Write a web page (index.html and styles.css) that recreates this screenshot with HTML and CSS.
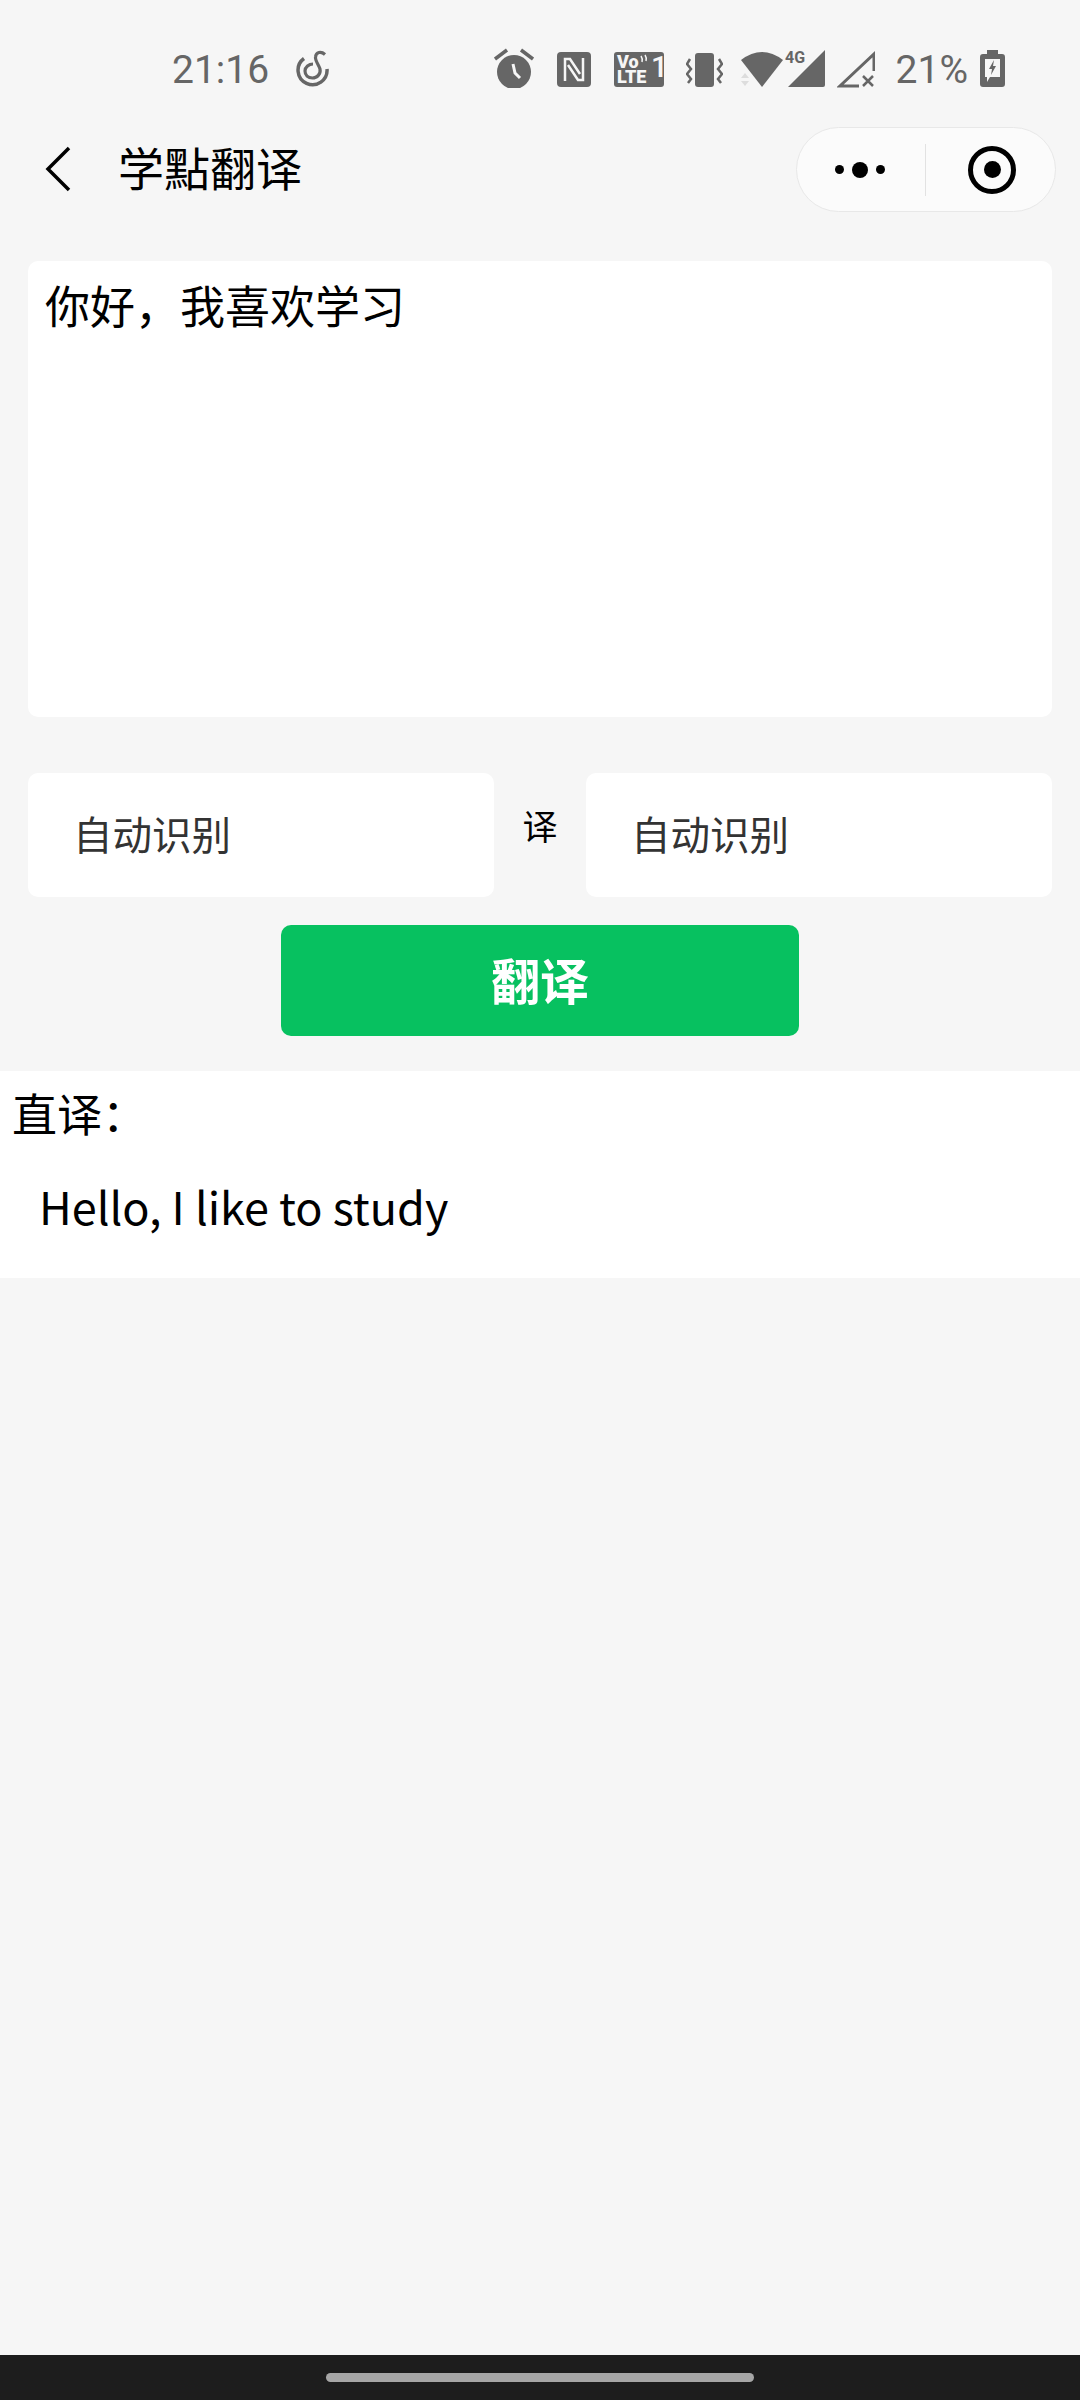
FILE: index.html
```html
<!DOCTYPE html>
<html lang="zh-CN">
<head>
    <meta charset="UTF-8">
    <meta name="viewport" content="width=device-width, initial-scale=1.0">
    <title>学點翻译</title>
    <link rel="stylesheet" href="styles.css">
</head>
<body>
    <div class="status">
        <span class="clock">21:16</span>
        <svg class="ic netease" width="34" height="40" viewBox="0 0 34 40">
            <path d="M8 10.5 A14.5 14.5 0 1 0 31 21" fill="none" stroke="#666" stroke-width="3.5"/>
            <path d="M29 6.5 C25 3 20 4 19.5 9 C19 13 23 17 24 21 C25 26 21 30 16.5 30 C12 30 9 27 9 23 C9 19 13 16 17 16" fill="none" stroke="#666" stroke-width="3.2"/>
        </svg>
        <div class="status-right">
            <svg class="ic alarm" width="40" height="40" viewBox="0 0 40 40">
                <circle cx="20" cy="24" r="17" fill="#666"/>
                <path d="M1 11 L13 2 M39 11 L27 2" stroke="#666" stroke-width="3.5"/>
                <path d="M19 16 L21 25 L26 30" fill="none" stroke="#f6f6f6" stroke-width="3"/>
            </svg>
            <svg class="ic nfc" width="34" height="40" viewBox="0 0 34 40">
                <rect x="0" y="4" width="34" height="35" rx="4" fill="#666"/>
                <path d="M8 33 V11 H13 L23 26 M26 10 V32 H21 L11 17" fill="none" stroke="#f6f6f6" stroke-width="2.5"/>
            </svg>
            <svg class="ic volte" width="54" height="40" viewBox="0 0 54 40">
                <rect x="0" y="4" width="50" height="35" rx="3" fill="#666"/>
                <text x="3" y="20" class="volte-txt">Vo</text>
                <text x="3" y="35" class="volte-txt">LTE</text>
                <text x="37" y="29" class="volte-num">1</text>
                <path d="M27 8 Q29 11 28 14 M31 7 Q33 10 32 13" fill="none" stroke="#f6f6f6" stroke-width="1.5"/>
            </svg>
            <svg class="ic vibrate" width="37" height="40" viewBox="0 0 37 40">
                <rect x="9" y="5" width="19" height="34" rx="3" fill="#666"/>
                <path d="M4 11 L1 16 L5 21 L1 26 L5 31 L2 35 M33 11 L36 16 L32 21 L36 26 L32 31 L35 35" fill="none" stroke="#666" stroke-width="2.5"/>
            </svg>
            <svg class="ic wifi" width="42" height="40" viewBox="0 0 42 40">
                <path d="M0 12 Q21 -4 42 12 L21 39 Z" fill="#666"/>
                <path d="M4 25 L8 30 H0 Z M0 33 H8 L4 38 Z" fill="#ddd"/>
            </svg>
            <svg class="ic signal" width="40" height="40" viewBox="0 0 40 40">
                <path d="M3 39 L40 2 V37 Q40 39 38 39 Z" fill="#666"/>
                <text x="0" y="15" class="four-g">4G</text>
            </svg>
            <svg class="ic nosignal" width="38" height="40" viewBox="0 0 38 40">
                <path d="M37 23 V6 L3 38 H22" fill="none" stroke="#666" stroke-width="3"/>
                <path d="M26 28 L36 38 M36 28 L26 38" stroke="#666" stroke-width="2.5"/>
            </svg>
            <span class="pct">21%</span>
            <svg class="ic battery" width="25" height="40" viewBox="0 0 25 40">
                <path d="M7 2 H18 V6 H22 Q25 6 25 9 V36 Q25 39 22 39 H3 Q0 39 0 36 V9 Q0 6 3 6 H7 Z" fill="#666"/>
                <path d="M5 11 H20 V29 H10 L7 34 V29 H5 Z" fill="#f6f6f6"/>
                <path d="M14 12 L9 21 H12 L11 27 L16 18 H13 Z" fill="#666"/>
            </svg>
        </div>
    </div>

    <div class="nav">
        <svg class="back" width="26" height="48" viewBox="0 0 26 48">
            <path d="M24 3 L3 24 L24 45" fill="none" stroke="#000" stroke-width="3.5"/>
        </svg>
        <div class="nav-title">学點翻译</div>
        <div class="capsule">
            <div class="capsule-side left">
                <span class="dot"></span>
                <span class="dot big"></span>
                <span class="dot"></span>
            </div>
            <div class="capsule-line"></div>
            <div class="capsule-side right">
                <span class="target"><span class="target-in"></span></span>
            </div>
        </div>
    </div>

    <div class="content">
        <div class="input-box">你好，我喜欢学习</div>
        <div class="lang-row">
            <div class="lang">自动识别</div>
            <div class="lang-mid">译</div>
            <div class="lang">自动识别</div>
        </div>
        <div class="btn">翻译</div>
    </div>

    <div class="result">
        <div class="result-label">直译：</div>
        <div class="result-text">Hello, I like to study</div>
    </div>

    <div class="spacer"></div>

    <div class="home-bar"><div class="home-pill"></div></div>
</body>
</html>
```

FILE: styles.css
```css
body {
    display: flex;
    flex-direction: column;
    height: 2400px;
    margin: 0;
    background-color: #f6f6f6;
    color: #000;
    font-family: "Noto Sans CJK SC", "Noto Sans", sans-serif;
}

/* status bar */
.status {
    display: flex;
    align-items: flex-start;
    height: 40px;
    padding: 48px 75px 0 172px;
    color: #666;
}
.clock, .pct {
    padding-top: 2px;
    font-family: Roboto, sans-serif;
    font-size: 39px;
    line-height: 40px;
}
.ic {
    display: block;
    flex: none;
}
.netease { margin-left: 27px; }
.status-right {
    display: flex;
    align-items: flex-start;
    margin-left: auto;
}
.nfc { margin-left: 23px; }
.volte {
    margin-left: 23px;
    margin-right: -4px;
}
.vibrate { margin-left: 22px; }
.wifi { margin-left: 18px; }
.signal { margin-left: 2px; }
.nosignal { margin-left: 12px; }
.pct { margin-left: 21px; }
.battery { margin-left: 12px; }
.volte-txt {
    font-family: Roboto, sans-serif;
    font-size: 18px;
    font-weight: 900;
    fill: #f6f6f6;
}
.volte-num {
    font-family: Roboto, sans-serif;
    font-size: 30px;
    font-weight: 500;
    fill: #f6f6f6;
}
.four-g {
    font-family: Roboto, sans-serif;
    font-size: 16px;
    font-weight: 700;
    fill: #666;
}

/* title bar */
.nav {
    display: flex;
    align-items: center;
    height: 163px;
    padding: 0 24px 0 45px;
}
.back {
    margin-bottom: 2px;
}
.nav-title {
    margin-left: 47px;
    padding-bottom: 8px;
    font-size: 46px;
    line-height: 60px;
}
.capsule {
    display: flex;
    align-items: center;
    box-sizing: border-box;
    width: 260px;
    height: 85px;
    margin-left: auto;
    background-color: #fbfbfb;
    border: 1px solid #e8e8e8;
    border-radius: 43px;
}
.capsule-side {
    display: flex;
    flex: 1;
    align-items: center;
    justify-content: center;
    gap: 8px;
}
.capsule-side.left { padding-right: 2px; }
.capsule-side.right { padding-left: 4px; }
.capsule-line {
    width: 1px;
    height: 52px;
    background-color: #e2e2e2;
}
.dot {
    width: 9px;
    height: 9px;
    background-color: #000;
    border-radius: 50%;
}
.dot.big {
    width: 16px;
    height: 16px;
}
.target {
    display: flex;
    align-items: center;
    justify-content: center;
    box-sizing: border-box;
    width: 48px;
    height: 48px;
    border: 5px solid #000;
    border-radius: 50%;
}
.target-in {
    width: 17px;
    height: 17px;
    background-color: #000;
    border-radius: 50%;
}

/* form */
.content {
    display: flex;
    flex-direction: column;
    padding: 10px 28px 0;
}
.input-box {
    box-sizing: border-box;
    height: 456px;
    padding: 12px 17px;
    background-color: #fff;
    border-radius: 10px;
    font-size: 45px;
    line-height: 64px;
}
.lang-row {
    display: flex;
    align-items: center;
    margin-top: 56px;
}
.lang {
    flex: 1;
    box-sizing: border-box;
    height: 124px;
    padding-left: 45px;
    background-color: #fff;
    border-radius: 10px;
    color: #333;
    font-size: 39.5px;
    line-height: 120px;
}
.lang-mid {
    width: 92px;
    padding-bottom: 22px;
    font-size: 35px;
    text-align: center;
}
.btn {
    align-self: center;
    width: 518px;
    height: 111px;
    margin-top: 28px;
    background-color: #07c160;
    border-radius: 10px;
    color: #fff;
    font-size: 49px;
    font-weight: 700;
    line-height: 107px;
    text-align: center;
}

/* result */
.result {
    margin-top: 35px;
    height: 207px;
    background-color: #fff;
}
.result-label {
    padding: 9px 0 0 12px;
    font-size: 45px;
    line-height: 66px;
}
.result-text {
    padding: 27px 0 0 39px;
    font-size: 45px;
    line-height: 66px;
}
.spacer {
    flex: 1;
}

/* android nav bar */
.home-bar {
    display: flex;
    justify-content: center;
    height: 45px;
    background-color: #1d1d1d;
}
.home-pill {
    width: 428px;
    height: 9px;
    margin-top: 18px;
    background-color: #a6a6a6;
    border-radius: 5px;
}
```
